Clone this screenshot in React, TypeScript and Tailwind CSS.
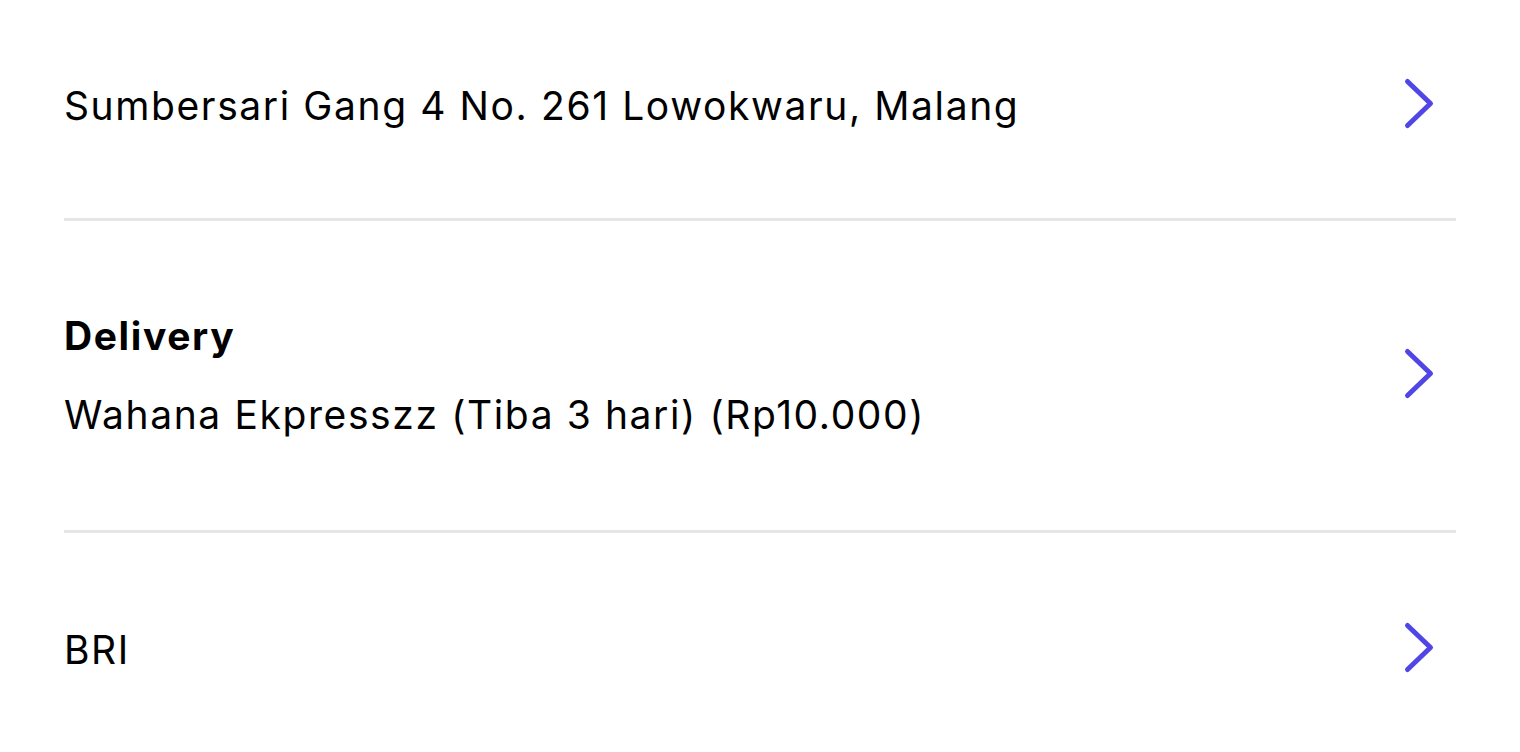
import React from "react";

const FONT = "font-['Inter','Noto_Sans',sans-serif] tracking-[1.6px]";

function Chevron() {
  return (
    <svg
      width="36"
      height="48"
      viewBox="0 0 36 48"
      className="shrink-0 overflow-visible"
    >
      <path
        d="M5.5 -0.5 L28.5 21.5 L5.5 43.5"
        fill="none"
        stroke="#5046e5"
        strokeWidth="5"
        strokeLinecap="round"
        strokeLinejoin="round"
      />
    </svg>
  );
}

function Row({
  children,
  className = "",
}: {
  children: React.ReactNode;
  className?: string;
}) {
  return (
    <div className={`flex items-center justify-between pr-[18px] ${className}`}>
      <div className="min-w-0 flex-1">{children}</div>
      <Chevron />
    </div>
  );
}

export default function App() {
  return (
    <div className={`min-h-screen bg-white px-16 text-black ${FONT}`}>
      <Row className="pt-[82px] pb-[88px]">
        <p className="text-[39px] leading-[48px]">
          Sumbersari Gang 4 No. 261 Lowokwaru, Malang
        </p>
      </Row>
      <div className="h-[3px] bg-[#e6e6e6]" />
      <Row className="pt-[91px] pb-[91px]">
        <p className="text-[39px] font-bold leading-[48px]">Delivery</p>
        <p className="mt-[31px] text-[39px] leading-[48px]">
          Wahana Ekpresszz (Tiba 3 hari) (Rp10.000)
        </p>
      </Row>
      <div className="h-[3px] bg-[#e6e6e6]" />
      <Row className="pt-[93px] pb-[88px]">
        <p className="text-[39px] leading-[48px]">BRI</p>
      </Row>
    </div>
  );
}
